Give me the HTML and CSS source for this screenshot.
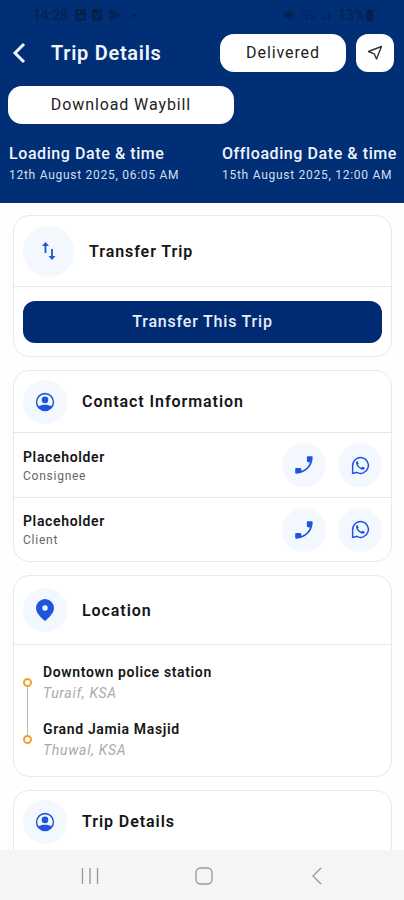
FILE: index.html
```html
<!DOCTYPE html>
<html lang="en">
<head>
    <meta charset="UTF-8">
    <meta name="viewport" content="width=device-width, initial-scale=1.0">
    <title>Trip Details</title>
    <link rel="stylesheet" href="styles.css">
</head>
<body>
    <svg class="sprite">
        <symbol id="user" viewBox="0 0 24 24"><path fill-rule="evenodd" d="M12 2a10 10 0 1 0 0 20 10 10 0 0 0 0-20zm0 1.700a8.300 8.300 0 0 1 6.800 13C17.500 15.600 15 15 12 15s-5.500.6-6.800 1.700A8.300 8.300 0 0 1 12 3.700z"/><circle cx="12" cy="9.700" r="3.600"/></symbol>
        <symbol id="phone" viewBox="0 0 20 20"><path d="M14 1.200h3.600c.7 0 1.100.4 1.100 1.100C18.700 11.400 11.400 18.700 2.300 18.700c-.7 0-1.100-.4-1.100-1.100V14c0-.7.4-1.100 1.100-1.100h3.800c.7 0 1.100.4 1.200 1l.2 2.100c4-1.500 7-4.500 8.500-8.500l-2.100-.2c-.6-.1-1-.5-1-1.200V2.300c0-.7.4-1.100 1.100-1.100z"/></symbol>
        <symbol id="whatsapp" viewBox="0 0 24 24"><path fill="none" stroke="currentColor" stroke-width="1.700" d="M3 21v-9a9 9 0 1 1 4.700 7.900L3 21z"/><path d="M8.700 6.900c-.3-.1-.7 0-1 .3-.7.8-1 1.800-.6 3.100 1 3 3.600 5.600 6.700 6.500 1.200.3 2.300-.1 2.900-1 .3-.5.3-1 .1-1.200l-2.300-1.100c-.3-.1-.5 0-.7.200l-.7.900c-2-.7-3.200-1.900-4-3.600l.7-.9c.1-.2.1-.4 0-.6z"/></symbol>
    </svg>
    <div class="screen">
        <header class="header">
            <div class="status-bar">
                <span class="clock">14:28</span>
                <svg class="status-left" viewBox="0 0 64 14">
                    <path fill-rule="evenodd" d="M3 1h7a2 2 0 0 1 2 2v8a2 2 0 0 1-2 2H3a2 2 0 0 1-2-2V3a2 2 0 0 1 2-2zm0 9h8L8 6 6 8.500 4.500 7zM4 3v2h2V3z"/>
                    <path fill-rule="evenodd" d="M20 1h6a2 2 0 0 1 2 2v8a2 2 0 0 1-2 2h-6a2 2 0 0 1-2-2V3a2 2 0 0 1 2-2zm0 4l2.500 5h1L27 5l-1-.7-3 3.500-2-3.500z"/>
                    <path class="line" d="M36 2v10l10-5zM36 2l6 7M36 12l6-7"/>
                    <circle cx="59.500" cy="7.500" r="1.800"/>
                </svg>
                <svg class="status-right" viewBox="0 0 48 14">
                    <path d="M0 5h3l4-4v12L3 9H0z"/>
                    <path class="line" d="M9 4v6M17 5q6-5 12 0M19 8q4-3 8 0M22 10l1 1 1-1M28 8v4M31 12V8M39 12V9M42 12V7M45 12V4"/>
                </svg>
                <span class="battery">13%</span>
                <svg class="battery-icon" viewBox="0 0 7 12"><path d="M2 0h3v1h2v11H0V1h2z"/></svg>
            </div>
            <div class="title-bar">
                <svg class="back" viewBox="0 0 14 22"><path d="M12 2L3 11l9 9"/></svg>
                <h1>Trip Details</h1>
                <button class="btn status-btn">Delivered</button>
                <button class="btn nav-btn">
                    <svg viewBox="0 0 16 16"><path d="M14.500 1.500L9.500 14 7.200 8.800 1.500 6.500z"/></svg>
                </button>
            </div>
            <button class="btn waybill-btn">Download Waybill</button>
            <div class="dates">
                <div class="date-left">
                    <h3>Loading Date &amp; time</h3>
                    <p>12th August 2025, 06:05 AM</p>
                </div>
                <div class="date-right">
                    <h3>Offloading Date &amp; time</h3>
                    <p>15th August 2025, 12:00 AM</p>
                </div>
            </div>
        </header>

        <main class="content">
            <section class="card transfer">
                <div class="card-head">
                    <span class="circle big"><svg class="icon-transfer" viewBox="0 0 16 20"><path d="M4.500 12V3M11 8v9"/><path class="head" d="M4.500 1L8 5H1zM11 19l3.500-4h-7z"/></svg></span>
                    <h2>Transfer Trip</h2>
                </div>
                <div class="card-body">
                    <button class="transfer-btn">Transfer This Trip</button>
                </div>
            </section>

            <section class="card">
                <div class="card-head">
                    <span class="circle"><svg class="icon-user"><use href="#user"/></svg></span>
                    <h2>Contact Information</h2>
                </div>
                <div class="contact">
                    <div class="contact-text">
                        <h4>Placeholder</h4>
                        <p>Consignee</p>
                    </div>
                    <span class="circle"><svg class="icon-phone"><use href="#phone"/></svg></span>
                    <span class="circle"><svg class="icon-wa"><use href="#whatsapp"/></svg></span>
                </div>
                <div class="contact">
                    <div class="contact-text">
                        <h4>Placeholder</h4>
                        <p>Client</p>
                    </div>
                    <span class="circle"><svg class="icon-phone"><use href="#phone"/></svg></span>
                    <span class="circle"><svg class="icon-wa"><use href="#whatsapp"/></svg></span>
                </div>
            </section>

            <section class="card location">
                <div class="card-head">
                    <span class="circle"><svg class="icon-pin" viewBox="0 0 18 22"><path fill-rule="evenodd" d="M9 0a9 9 0 0 0-9 9c0 5 5 9.500 9 13 4-3.500 9-8 9-13a9 9 0 0 0-9-9zm0 6.300a2.700 2.700 0 1 1 0 5.400 2.700 2.700 0 0 1 0-5.400z"/></svg></span>
                    <h2>Location</h2>
                </div>
                <div class="route">
                    <div class="track">
                        <span class="dot"></span>
                        <span class="track-line"></span>
                        <span class="dot"></span>
                    </div>
                    <div class="stops">
                        <div class="stop">
                            <h4>Downtown police station</h4>
                            <p>Turaif, KSA</p>
                        </div>
                        <div class="stop">
                            <h4>Grand Jamia Masjid</h4>
                            <p>Thuwal, KSA</p>
                        </div>
                    </div>
                </div>
            </section>

            <section class="card last">
                <div class="card-head">
                    <span class="circle"><svg class="icon-user"><use href="#user"/></svg></span>
                    <h2>Trip Details</h2>
                </div>
            </section>
        </main>

        <nav class="bottom-nav">
            <svg viewBox="0 0 18 18"><path d="M1.500 1v16M9 1v16M16.500 1v16"/></svg>
            <svg viewBox="0 0 18 18"><rect x="1" y="1" width="16" height="16" rx="4.500"/></svg>
            <svg viewBox="0 0 18 18"><path d="M13 1L5 9l8 8"/></svg>
        </nav>
    </div>
</body>
</html>
```
FILE: styles.css
```css
* { box-sizing: border-box; margin: 0; padding: 0; }
body { font-family: Roboto, "Liberation Sans", sans-serif; background: #fefefe; color: #151515; }
button { font-family: inherit; border: none; }
svg { display: block; flex-shrink: 0; }
.sprite { display: none; }
.screen { width: 404px; height: 900px; display: flex; flex-direction: column; overflow: hidden; }

.header { height: 203px; flex-shrink: 0; background: #002f76; color: #f1f4fb; }
.status-bar { display: flex; align-items: center; height: 30px; padding: 0 0 0 33px; color: #04204c; fill: #04204c; font-size: 14px; }
.status-bar .line { fill: none; stroke: #04204c; stroke-width: 1.2; }
.clock { width: 41px; }
.status-left { width: 64px; height: 14px; }
.status-right { width: 48px; height: 14px; margin: 0 6px 0 auto; }
.battery { letter-spacing: 0.3px; }
.battery-icon { width: 7px; height: 12px; margin: 0 31px 0 1px; }
.title-bar { display: flex; align-items: center; height: 38px; margin-top: 4px; padding: 0 10px 0 12px; }
.back { width: 14px; height: 22px; margin-right: 25px; fill: none; stroke: #f1f4fb; stroke-width: 3; }
h1 { flex: 1; font-size: 20px; font-weight: 600; letter-spacing: 0.7px; white-space: nowrap; }
.btn { height: 38px; padding-bottom: 2px; background: #fff; color: #222; font-size: 16px; letter-spacing: 0.9px; border-radius: 14px; }
.status-btn { width: 126px; }
.nav-btn { display: flex; align-items: center; justify-content: center; width: 38px; margin-left: 10px; padding-bottom: 0; border-radius: 12px; }
.nav-btn svg { width: 16px; height: 16px; fill: none; stroke: #333; stroke-width: 1.4; stroke-linejoin: round; }
.waybill-btn { display: block; width: 226px; margin: 14px 0 0 8px; }
.dates { display: flex; justify-content: space-between; padding: 20px 7px 0 9px; white-space: nowrap; }
.date-right { width: 175px; }
.dates h3 { font-size: 16px; font-weight: 500; line-height: 20px; letter-spacing: 0.58px; }
.dates p { font-size: 12px; line-height: 14px; margin-top: 4px; letter-spacing: 0.73px; color: #d6dff0; }

.content { flex: 1; min-height: 0; overflow: hidden; display: flex; flex-direction: column; gap: 13px; padding: 12px 12px 0 13px; }
.card { flex-shrink: 0; background: #fff; border: 1px solid #e9e9e9; border-radius: 16px; }
.card-head { display: flex; align-items: center; gap: 15px; height: 61px; padding-left: 9px; }
.transfer .card-head { height: 70px; }
.location .card-head { height: 68px; }
.last { height: 100px; }
h2 { font-size: 16px; font-weight: 600; letter-spacing: 0.93px; }
.circle { display: flex; align-items: center; justify-content: center; flex-shrink: 0; width: 44px; height: 44px; border-radius: 50%; background: #f3f7fe; color: #1d55dc; fill: #1d55dc; }
.circle.big { width: 51px; height: 51px; }
.icon-transfer { width: 16px; height: 20px; fill: none; stroke: #1d55dc; stroke-width: 1.8; }
.icon-transfer .head { fill: #1d55dc; stroke: none; }
.icon-user { width: 22px; height: 22px; }
.icon-phone { width: 20px; height: 20px; }
.icon-wa { width: 21px; height: 21px; }
.icon-pin { width: 18px; height: 22px; }
.card-body { padding: 14px 9px 13px; border-top: 1px solid #e9e9e9; }
.transfer-btn { display: block; width: 100%; height: 42px; padding-bottom: 2px; border-radius: 12px; background: #002b73; color: #e9eefa; font-size: 16px; font-weight: 500; letter-spacing: 0.8px; }
.contact { display: flex; align-items: center; gap: 12px; height: 65px; padding: 0 9px; border-top: 1px solid #e6e6e6; }
.contact + .contact { height: 64px; }
.contact-text { flex: 1; padding-top: 2px; }
h4 { font-size: 14px; font-weight: 600; line-height: 18px; letter-spacing: 0.64px; }
.contact p { font-size: 12px; line-height: 18px; margin-top: 1px; letter-spacing: 0.75px; color: #666; }
.route { display: flex; gap: 11px; height: 132px; padding: 18px 9px 0; border-top: 1px solid #e9e9e9; }
.track { display: flex; flex-direction: column; align-items: center; height: 66px; margin-top: 15px; }
.dot { width: 9px; height: 9px; border: 2px solid #f0a030; border-radius: 50%; background: #fff; }
.track-line { flex: 1; width: 1px; background: #bbb; }
.stop { height: 57px; }
.stop p { font-size: 14px; font-style: italic; line-height: 20px; margin-top: 2px; letter-spacing: 0.7px; color: #aaa; }

.bottom-nav { display: flex; align-items: center; justify-content: space-between; height: 50px; flex-shrink: 0; padding: 1px 78px 0 81px; background: #f5f5f8; }
.bottom-nav svg { width: 18px; height: 18px; fill: none; stroke: #9c9c9f; stroke-width: 1.4; }
```
